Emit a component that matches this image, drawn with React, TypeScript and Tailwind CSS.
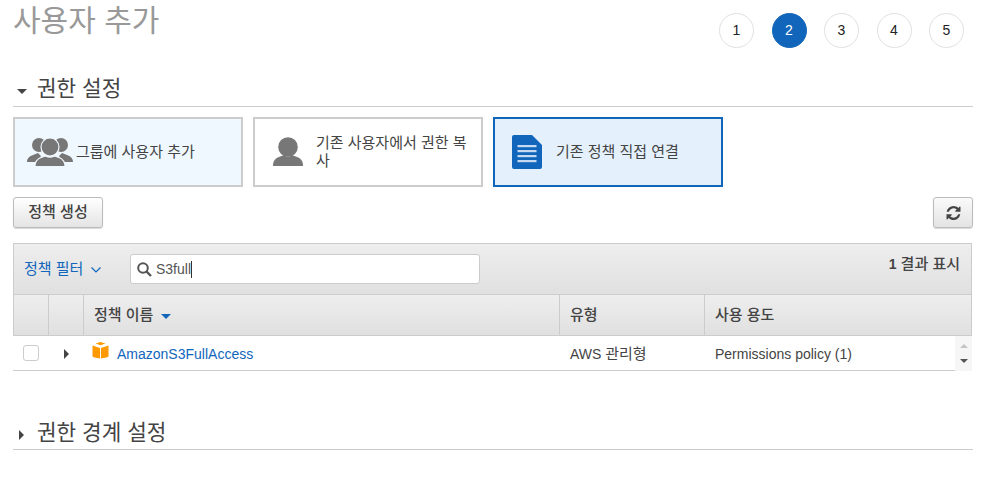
const font = "font-['Liberation_Sans','Noto_Sans_CJK_KR',sans-serif]";

const GroupIcon = () => (
  <svg width="46" height="30" viewBox="0 0 46 30" className="shrink-0">
    <g fill="#777">
      <circle cx="12" cy="8" r="7" />
      <circle cx="34" cy="8" r="7" />
      <path d="M0 25c0-4 3-6 6-7l5-2 3 3-4 6z" />
      <path d="M46 25c0-4-3-6-6-7l-5-2-3 3 4 6z" />
    </g>
    <g fill="#777" stroke="#f0f8ff" strokeWidth="1.2">
      <circle cx="23" cy="10" r="9" />
      <path d="M8 29.500c0-5 2-7.500 6-9l4.500-1.500c3 1.500 6 1.500 9 0l4.500 1.500c4 1.500 6 4 6 9z" />
    </g>
  </svg>
);

const UserIcon = () => (
  <svg width="32" height="30" viewBox="0 0 32 30" className="shrink-0">
    <circle cx="16" cy="10" r="9.800" fill="#777" />
    <path d="M1 29c0-5 2-7.500 6-9l4.500-1.800c3 1.800 6 1.800 9 0l4.500 1.800c4 1.500 6 4 6 9z" fill="#777" />
  </svg>
);

const DocIcon = () => (
  <svg width="30" height="34" viewBox="0 0 30 34" className="shrink-0">
    <path d="M2 0h18l10 10v22a2 2 0 0 1-2 2H2a2 2 0 0 1-2-2V2a2 2 0 0 1 2-2z" fill="#1166bb" />
    <g fill="#c5daf0">
      <rect x="5.500" y="10" width="19" height="2.200" />
      <rect x="5.500" y="15" width="19" height="2.200" />
      <rect x="5.500" y="20" width="19" height="2.200" />
      <rect x="5.500" y="25" width="19" height="2.200" />
    </g>
  </svg>
);

const CubeIcon = () => (
  <svg width="17" height="17" viewBox="0 0 17 17">
    <path d="M3.500 1.500 8.500 0l5 1.500-5 1.800z" fill="#f90" />
    <path d="M0.500 3.500 8 6v10.500l-5.500-1-2-1z" fill="#f90" />
    <path d="M16.500 3.500 9 6v10.500l5.500-1 2-1z" fill="#f90" />
  </svg>
);

const RefreshIcon = () => (
  <svg width="15" height="14" viewBox="0 0 1536 1536">
    <path
      fill="#444"
      d="M1511 928q0 5-1 7-64 268-268 434.500T764 1536q-146 0-282.500-55T238 1324l-129 129q-19 19-45 19t-45-19-19-45V960q0-26 19-45t45-19h448q26 0 45 19t19 45-19 45L420 1142q71 66 161 102t187 36q134 0 250-65t186-179q11-17 53-117 8-23 30-23h192q13 0 22.500 9.500t9.500 22.500zm25-800v448q0 26-19 45t-45 19h-448q-26 0-45-19t-19-45 19-45l138-138q-148-137-349-137-134 0-250 65T332 500q-11 17-53 117-8 23-30 23H50q-13 0-22.500-9.500T18 608v-7q65-268 270-434.500T768 0q146 0 284 55.500T1297 212l130-129q19-19 45-19t45 19 19 45z"
    />
  </svg>
);

const SearchIcon = () => (
  <svg width="15" height="15" viewBox="0 0 15 15" fill="none" stroke="#555" strokeWidth="2">
    <circle cx="6" cy="6" r="4.800" />
    <path d="m9.500 9.500 4.500 4.500" strokeWidth="2.400" />
  </svg>
);

const CaretRight = ({ className }: { className?: string }) => (
  <span className={"inline-block h-0 w-0 border-y-[5px] border-l-[5px] border-y-transparent border-l-[#444] " + className} />
);

const SectionHeader = ({ title, open }: { title: string; open?: boolean }) => (
  <div className={"flex h-[35px] items-center border-b border-[#ccc] " + (open ? "pt-[2px]" : "pt-[4px]")}>
    {open ? (
      <span className="ml-[4px] mr-[10px] mt-[3px] h-0 w-0 border-x-[5px] border-t-[5px] border-x-transparent border-t-[#444]" />
    ) : (
      <CaretRight className="ml-[6px] mr-[13px] mt-[2px]" />
    )}
    <h2 className="text-[21.300px] font-normal text-[#444]">{title}</h2>
  </div>
);

const steps = [1, 2, 3, 4, 5];

const cards = [
  { label: "그룹에 사용자 추가", icon: <GroupIcon />, cls: "border-[#ccc] bg-[#f0f8ff] pl-[12px] gap-[3px]" },
  { label: "기존 사용자에서 권한 복사", icon: <UserIcon />, cls: "border-[#ccc] bg-white pl-[17px] gap-[12px]" },
  { label: "기존 정책 직접 연결", icon: <DocIcon />, cls: "border-[#1166bb] bg-[#e4f1fd] pl-[17px] gap-[14px]" },
];

export default function App() {
  return (
    <div className={font + " h-[489px] w-[987px] overflow-hidden bg-white pl-[13px] pr-[14px] text-[14px] text-[#444]"}>
      <div className="flex h-[72px] justify-between">
        <h1 className="mt-[3px] text-[30px] leading-[36px] font-normal text-[#999]">사용자 추가</h1>
        <div className="mt-[13px] mr-[9px] flex gap-[17.500px]">
          {steps.map((n) => (
            <div
              key={n}
              className={
                "flex h-[35px] w-[35px] items-center justify-center rounded-full border text-[14px] " +
                (n === 2 ? "border-[#1166bb] bg-[#1166bb] text-white" : "border-[#e1e1e1] bg-white text-[#222]")
              }
            >
              {n}
            </div>
          ))}
        </div>
      </div>

      <SectionHeader title="권한 설정" open />

      <div className="mt-[10px] flex gap-[10px]">
        {cards.map((c) => (
          <div key={c.label} className={"flex h-[70px] w-[230px] items-center border-2 pr-[12px] text-[15px] " + c.cls}>
            {c.icon}
            <span className="leading-[18px]">{c.label}</span>
          </div>
        ))}
      </div>

      <div className="mt-[10px] flex justify-between">
        <button className="h-[31px] w-[90px] rounded-[3px] border border-[#bbb] bg-gradient-to-b from-white to-[#e4e4e4] text-[15px] font-medium text-[#444] shadow-[0_1px_1px_rgba(0,0,0,0.15)]">
          정책 생성
        </button>
        <button className="flex h-[31px] w-[40px] items-center justify-center rounded-[3px] border border-[#bbb] bg-gradient-to-b from-[#fafafa] to-[#e4e4e4] shadow-[0_1px_1px_rgba(0,0,0,0.15)]">
          <RefreshIcon />
        </button>
      </div>

      <div className="mt-[15px] mr-px border-b border-[#ccc]">
        <div className="flex h-[51px] border-x border-t border-[#ccc] bg-gradient-to-b from-[#eee] to-[#e0e0e0]">
          <div className="mt-[15px] ml-[10px] flex h-[20px] w-[106px] items-center text-[15px] text-[#1166bb]">
            정책 필터
            <svg width="12" height="8" viewBox="0 0 12 8" className="ml-[7px] mt-[2px]" fill="none" stroke="#1166bb" strokeWidth="1.200">
              <path d="m1.500 1.500 4.500 4.500 4.500-4.500" />
            </svg>
          </div>
          <div className="mt-[10px] flex h-[30px] w-[350px] items-center rounded-[3px] border border-[#ccc] bg-white pl-[6px] text-[#555]">
            <SearchIcon />
            <span className="ml-[4px]">S3full</span>
            <span className="h-[17px] w-px bg-[#333]" />
          </div>
          <div className="ml-auto mt-[9px] mr-[11px] text-[15px] font-medium text-[#444]">
            <span className="font-bold text-[14px]">1</span> 결과 표시
          </div>
        </div>

        <div className="flex h-[42px] border border-[#ccc] bg-gradient-to-b from-[#eee] to-[#e0e0e0] text-[15px] font-medium">
          <div className="w-[35px] border-r border-[#ccc]" />
          <div className="w-[35px] border-r border-[#ccc]" />
          <div className="flex w-[476px] items-center gap-[8px] border-r border-[#ccc] pl-[10px]">
            정책 이름
            <span className="mt-[2px] h-0 w-0 border-x-[5px] border-t-[5px] border-x-transparent border-t-[#1166bb]" />
          </div>
          <div className="flex w-[145px] items-center border-r border-[#ccc] pl-[10px]">유형</div>
          <div className="flex flex-1 items-center pl-[10px]">사용 용도</div>
        </div>

        <div className="flex h-[34px] items-center">
          <div className="flex w-[36px] justify-center">
            <span className="h-[16px] w-[16px] rounded-[3px] border border-[#ccc] bg-white" />
          </div>
          <div className="flex w-[35px] justify-center">
            <CaretRight className="mt-[1px]" />
          </div>
          <div className="flex w-[476px] items-center gap-[8px] pl-[8px]">
            <span className="-mt-[5px]"><CubeIcon /></span>
            <span className="mt-[2px] text-[#1166bb]">AmazonS3FullAccess</span>
          </div>
          <div className="mt-[2px] w-[145px] pl-[10px]">AWS <span className="text-[15px]">관리형</span></div>
          <div className="mt-[2px] flex-1 pl-[10px]">Permissions policy (1)</div>
          <div className="flex h-[35px] w-[17px] flex-col items-center justify-center gap-[11px] self-start bg-[#f6f6f6]">
            <span className="h-0 w-0 border-x-[4px] border-b-[4px] border-x-transparent border-b-[#c4c4c4]" />
            <span className="h-0 w-0 border-x-[4px] border-t-[4px] border-x-transparent border-t-[#555]" />
          </div>
        </div>
      </div>

      <div className="mt-[44px]">
        <SectionHeader title="권한 경계 설정" />
      </div>
    </div>
  );
}
